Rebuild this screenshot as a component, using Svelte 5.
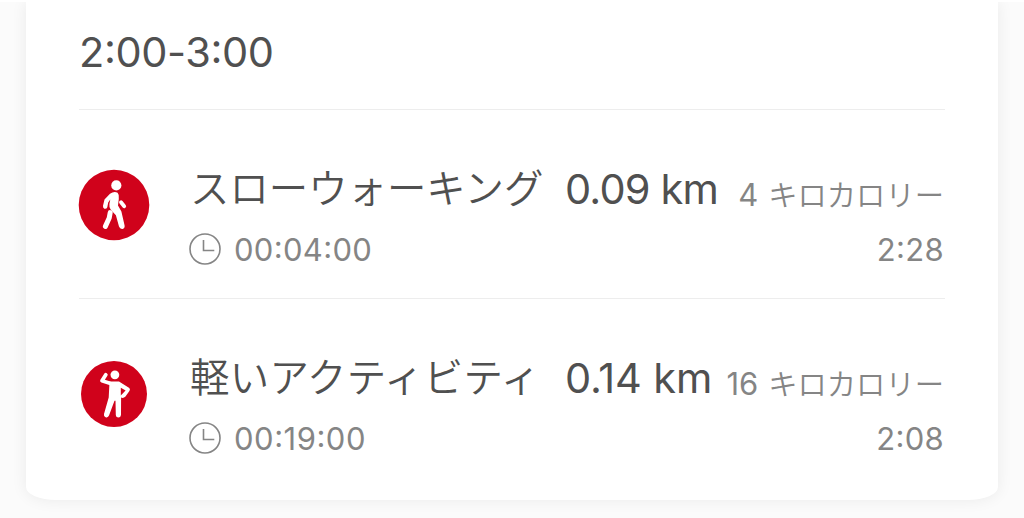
<script>
    const period = "2:00-3:00";

    const activities = [
        {
            type: "walk",
            name: "スローウォーキング",
            distance: "0.09 km",
            calories: 4,
            duration: "00:04:00",
            time: "2:28",
        },
        {
            type: "light",
            name: "軽いアクティビティ",
            distance: "0.14 km",
            calories: 16,
            duration: "00:19:00",
            time: "2:08",
        },
    ];
</script>

<!-- colons sit at the middle of the digits, not on the baseline -->
{#snippet clockText(value)}{#each value.split(":") as part, i}{#if i > 0}<span class="colon">:</span>{/if}{part}{/each}{/snippet}

<main>
    <section class="card">
        <h2>{@render clockText(period)}</h2>
        {#each activities as activity}
            <article class="row {activity.type}">
                <svg class="badge" viewBox="0 0 72 72">
                    {#if activity.type === "walk"}
                        <circle class="disc" cx="36" cy="36" r="35.3" />
                        <circle class="fill" cx="38.3" cy="16.4" r="5.1" />
                        <path class="fill" d="M32 24.8Q36 22 39.6 23.8Q41.6 26 40.8 30L40 36.6L43.4 42.5L46.6 56.6Q47 59.6 44.6 60Q42 60.4 41 57.6L37.9 46.2L32.6 40.6Q31 38.4 31.4 35L32.3 30.6L30.2 33.4L29.3 38.2Q28.4 40.4 26.3 39.7Q24.7 38.8 25 36.8L26.5 30.4Z" />
                        <path class="limb" d="M32.2 43.6L31.2 49L27.4 57.4" />
                        <path class="limb thin" d="M43 33.2L46.2 37.2" />
                    {:else}
                        <circle class="disc" cx="36" cy="36" r="33" />
                        <circle class="fill" cx="36.9" cy="16.8" r="4.4" />
                        <path class="limb thin" d="M31.8 25.2L24 22.7L27.8 16.8" />
                        <path class="fill" d="M30 23.4L41 23.4L51.3 29.9Q52.6 31.2 51.4 33L47.5 38.5Q45.4 40.6 43.1 39.6L43 57Q42.6 59.6 40.4 59.6Q38 59.6 37.8 57L37.5 42.8L36.5 42.8L31 57.6Q30 60 27.6 59.2Q25.4 58.4 26 56L30.7 39.5L31.4 26.2Z" />
                        <path class="gap" d="M42.8 29.8L47.6 32.4L42.8 37.4Z" />
                    {/if}
                </svg>
                <div class="info">
                    <div class="line title">
                        <span class="name">{activity.name}</span>
                        <span class="distance">{activity.distance}</span>
                        <span class="calories">
                            <span class="amount">{activity.calories}</span>
                            <span class="unit">キロカロリー</span>
                        </span>
                    </div>
                    <div class="line details">
                        <svg class="clock" viewBox="0 0 32 32">
                            <circle cx="16" cy="16" r="15" />
                            <path d="M14.5 7V17.5H25.3" />
                        </svg>
                        <span class="duration">{@render clockText(activity.duration)}</span>
                        <time>{@render clockText(activity.time)}</time>
                    </div>
                </div>
            </article>
        {/each}
    </section>
</main>

<style>
    :global(body) {
        margin: 0;
        background: #fff;
    }

    main {
        box-sizing: border-box;
        height: 518px;
        padding: 0 26px 18px;
        border-top: 2px solid #fff;
        background: #fbfbfb;
        overflow: hidden;
        font-family: Inter, "Noto Sans CJK JP", sans-serif;
        font-weight: 370;
        color: #505050;
    }

    .card {
        box-sizing: border-box;
        height: 498px;
        padding: 0 53px;
        background: #fff;
        border-radius: 0 0 30px 30px / 0 0 13px 13px;
        box-shadow: 0 0 16px rgba(0, 0, 0, 0.07);
    }

    h2 {
        box-sizing: border-box;
        height: 107px;
        margin: 0;
        padding-top: 25px;
        font-size: 41.5px;
        font-weight: 370;
        line-height: 50px;
        letter-spacing: -0.4px;
    }

    .colon {
        display: inline-block;
        transform: translateY(-0.09em);
    }

    .row {
        box-sizing: border-box;
        display: flex;
        height: 189px;
        padding-top: 59px;
        border-top: 1px solid #ededed;
    }

    .badge {
        width: 72px;
        height: 72px;
        margin-left: -1px;
        flex: none;
    }

    .disc, .gap {
        fill: #d0021b;
    }

    .fill {
        fill: #fff;
    }

    .limb {
        fill: none;
        stroke: #fff;
        stroke-width: 5;
        stroke-linecap: round;
        stroke-linejoin: round;
    }

    .thin {
        stroke-width: 3.8;
    }

    .info {
        width: 754px;
        margin-left: 40px;
    }

    .line {
        display: flex;
        white-space: nowrap;
    }

    .title {
        height: 60px;
        align-items: baseline;
        line-height: 34px;
    }

    .name {
        width: 375px;
        font-family: "Noto Sans CJK JP", sans-serif;
        font-size: 39.4px;
        font-weight: 350;
    }

    .light .name {
        letter-spacing: 0.3px;
    }

    .distance {
        font-size: 41.5px;
        font-weight: 400;
        letter-spacing: -0.8px;
        transform: translateY(1px);
    }

    .light .distance {
        letter-spacing: -0.1px;
    }

    .calories {
        display: flex;
        align-items: baseline;
        gap: 10px;
        margin-left: auto;
        color: #858585;
        font-size: 31px;
        transform: translateY(3px);
    }

    .unit {
        font-family: "Noto Sans CJK JP", sans-serif;
        font-size: 29.3px;
        font-weight: 350;
    }

    .details {
        height: 40px;
        align-items: center;
        color: #858585;
        font-size: 31px;
        letter-spacing: 0.3px;
    }

    .light .duration {
        letter-spacing: 0.5px;
    }

    .clock {
        width: 32px;
        height: 32px;
        margin: 0 13px 0 -1px;
        fill: none;
        stroke: #858585;
        stroke-width: 1.6;
    }

    time {
        margin-left: auto;
    }
</style>
